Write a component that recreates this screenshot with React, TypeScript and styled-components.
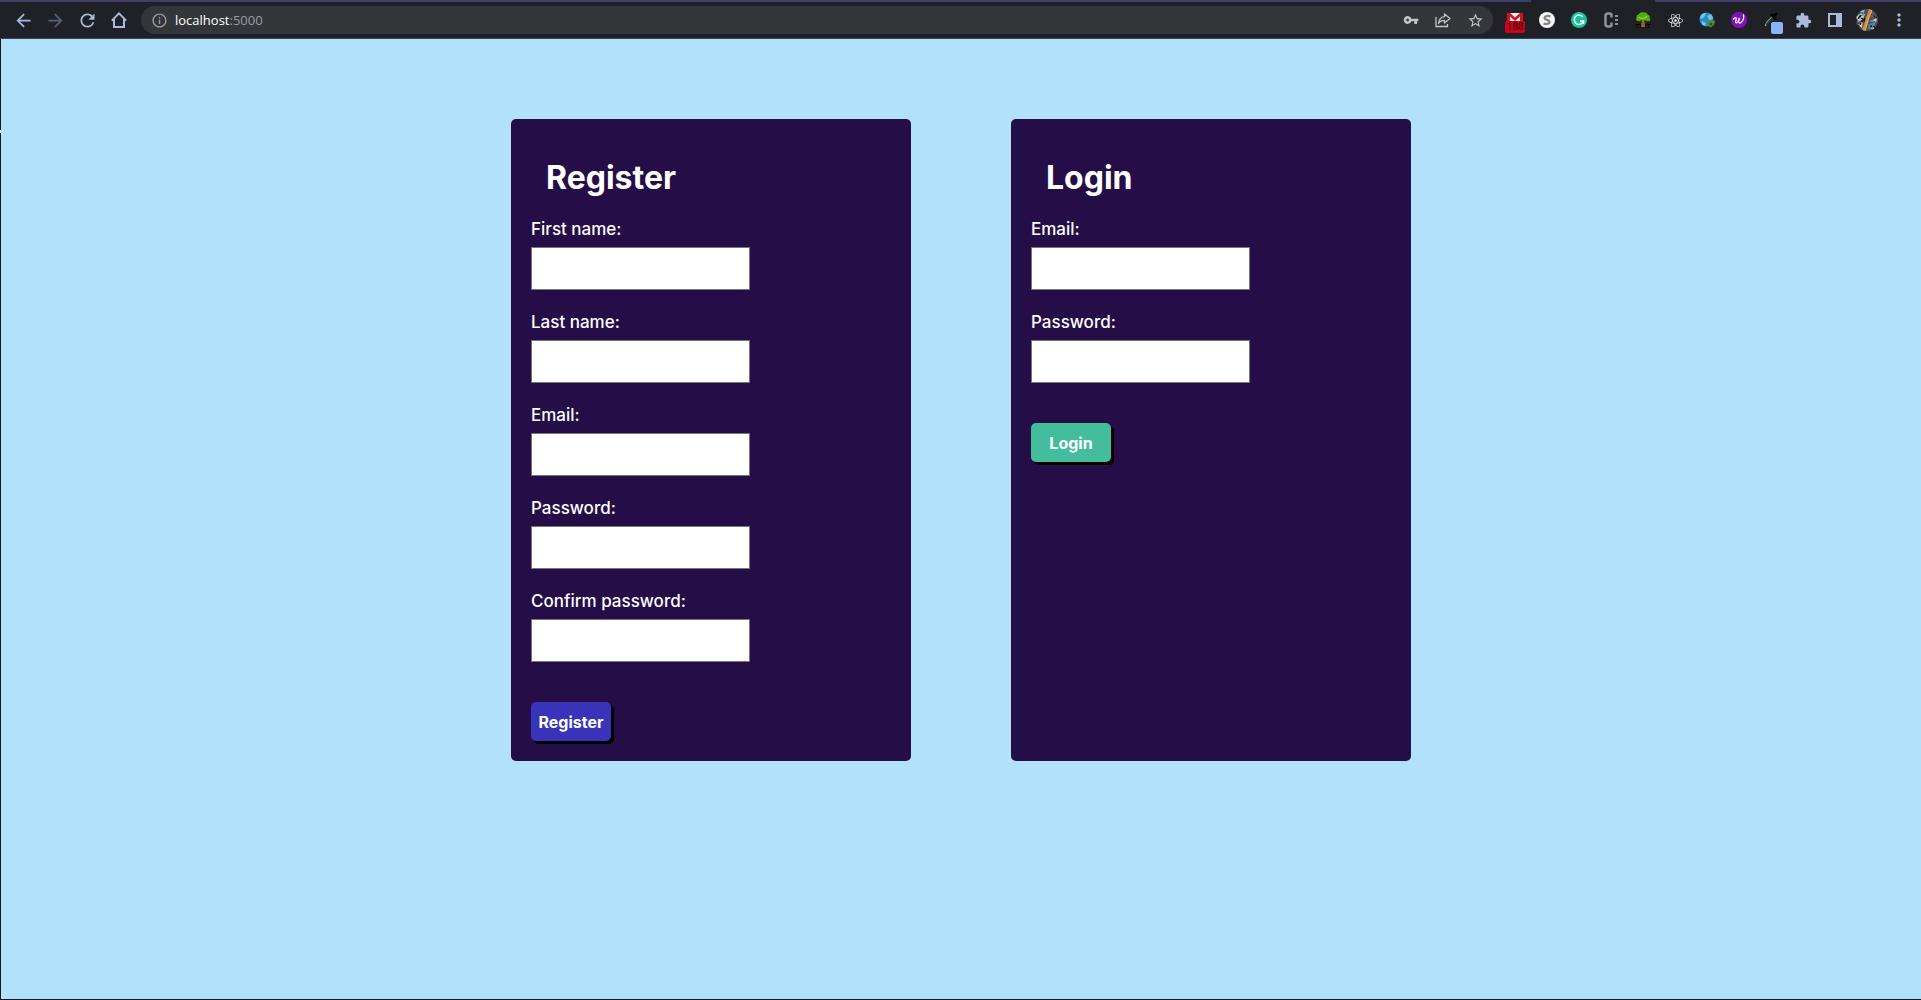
import React, { useId } from "react";
import styled, { createGlobalStyle } from "styled-components";
import {
  MdArrowBack,
  MdArrowForward,
  MdRefresh,
  MdInfoOutline,
  MdVpnKey,
  MdStarBorder,
  MdExtension,
  MdMoreVert,
} from "react-icons/md";
import { FaReact } from "react-icons/fa";

const GlobalStyle = createGlobalStyle`
  *, *::before, *::after { box-sizing: border-box; }
  body { margin: 0; background: #b1e1fb; }
`;

const Window = styled.div`
  min-height: 100vh;
  display: flex;
  flex-direction: column;
  background: #b1e1fb;
  font-family: Inter, "Liberation Sans", sans-serif;
`;

const TabStrip = styled.div`
  display: flex;
  height: 2px;
  background: #202127;
`;

const TabStripFill = styled.div<{ $width?: number }>`
  background: #413d68;
  flex: ${(p) => (p.$width ? `0 0 ${p.$width}px` : "1")};
`;

const ActiveTab = styled.div`
  flex: 0 0 124px;
`;

const Toolbar = styled.header`
  display: flex;
  align-items: center;
  height: 37px;
  padding: 0 6px 0 7px;
  background: #202127;
  border-bottom: 1px solid #45424e;
`;

const Group = styled.div`
  display: flex;
  flex: none;
`;

const IconButton = styled.button<{ $color?: string }>`
  display: flex;
  align-items: center;
  justify-content: center;
  width: 32px;
  height: 28px;
  padding: 0;
  border: 0;
  background: none;
  color: ${(p) => p.$color ?? "#a9bbdc"};
`;

const Omnibox = styled.div`
  display: flex;
  flex: 1;
  align-items: center;
  justify-content: space-between;
  height: 28px;
  margin: 0 6px;
  padding: 0 2px;
  border-radius: 14px;
  background: #35363a;
`;

const Address = styled.button`
  padding: 0;
  border: 0;
  background: none;
  color: #ffffff;
  font: 13px/20px "Open Sans", "Noto Sans", sans-serif;
`;

const Port = styled.span`
  color: #9a9da1;
`;

const ExtensionIcon = styled.span`
  position: relative;
  display: flex;
`;

const Badge = styled.span`
  position: absolute;
  top: 9px;
  left: -2px;
  width: 20px;
  border-radius: 2px;
  background: #d3021c;
  color: #38000a;
  font: 500 10px/12px Roboto, sans-serif;
  text-align: center;
`;

const Swatch = styled.span`
  position: absolute;
  top: 10px;
  left: 8px;
  width: 12px;
  height: 12px;
  border-radius: 2px;
  background: #8ab4f8;
`;

const Body = styled.div`
  flex: 1;
  display: flex;
  border-bottom: 1px solid #1e1422;
`;

const WindowEdge = styled.div`
  flex: 0 0 1px;
  background: linear-gradient(#17181c 91px, #ffffff 91px, #ffffff 94px, #17181c 94px);
`;

const Page = styled.main`
  display: flex;
  justify-content: center;
  flex: 1;
  align-items: flex-start;
  padding: 80px 20px;
`;

const Cards = styled.div`
  display: flex;
  justify-content: center;
  flex: 1;
  gap: 100px;
`;

const Card = styled.form`
  flex: 0 1 400px;
  padding: 20px;
  border-radius: 5px;
  background: #250d47;
  color: #ffffff;
`;

const Title = styled.h1`
  margin: 0;
  padding: 15px;
  font-size: 32px;
  line-height: 48px;
  font-weight: 700;
`;

const FieldRow = styled.div`
  display: flex;
  flex-direction: column;
  align-items: flex-start;
  gap: 6px;
  margin-bottom: 20px;
`;

const Label = styled.label`
  font-size: 17px;
  line-height: 24px;
  font-weight: 500;
`;

const TextInput = styled.input`
  width: 219px;
  max-width: 100%;
  height: 43px;
  padding: 0 8px;
  border: 1px solid #767676;
  background: #ffffff;
  font: inherit;
`;

const SubmitButton = styled.button<{ $color: string }>`
  display: block;
  width: 80px;
  height: 39px;
  margin-top: 40px;
  padding: 0;
  border: 0;
  border-radius: 5px;
  background: ${(p) => p.$color};
  box-shadow: 3px 3px #000000;
  color: #ffffff;
  font-family: inherit;
  font-size: 16px;
  font-weight: 700;
`;

const HomeIcon = () => (
  <svg width="16" height="16" viewBox="0 0 16 16" fill="none" stroke="currentColor" strokeWidth="2">
    <path d="M.8 8.6 8 1.4l7.2 7.2M3 7v8h10V7" />
  </svg>
);

const ShareIcon = () => (
  <svg width="16" height="16" viewBox="0 0 16 16" fill="none" stroke="currentColor" strokeWidth="1.3">
    <path d="M1 5v9.500h11.500V12" />
    <path d="M9.500 2 15 6.500 9.500 11V8.400C6.500 8.400 4.800 9.300 3.500 11.500 3.900 7.500 6 5 9.500 4.600Z" strokeLinejoin="round" />
  </svg>
);

const MailIcon = () => (
  <svg width="16" height="16" viewBox="0 0 16 16">
    <path d="M0 1h16v12H0z" fill="#d5101f" />
    <path d="M3 1h10L8 5.500z" fill="#f6eeee" />
    <path d="M3 4.500 8 9l5-4.500V10H3z" fill="#f6eeee" />
  </svg>
);

const ScriptIcon = () => (
  <svg width="16" height="16" viewBox="0 0 16 16">
    <circle cx="8" cy="8" r="8" fill="#f5f5f5" />
    <path d="M11.500 4.300C8.500 3.300 5.500 4 5.500 6c0 2 5 1.700 5 3.800 0 2.500-3.500 2.700-6 1.700" fill="none" stroke="#858585" strokeWidth="2.300" />
  </svg>
);

const GrammarIcon = () => (
  <svg width="16" height="16" viewBox="0 0 16 16">
    <circle cx="8" cy="8" r="8" fill="#15c39a" />
    <path d="M11.800 5A4.700 4.700 0 1 0 12.500 9H9M12.500 9v3" fill="none" stroke="#fff" strokeWidth="1.500" />
  </svg>
);

const ColonIcon = () => (
  <svg width="16" height="16" viewBox="0 0 16 16" fill="#909193">
    <path d="M8.500 5.500V3.500Q8.500 1.500 6.500 1.500H5Q2.500 1.500 2.500 4v8q0 2.500 2.500 2.500h1.500q2 0 2-2V10.500" fill="none" stroke="#909193" strokeWidth="2.500" />
    <path d="M12 3h3v2h-3zM12 7h3v2h-3zM12 11h3v2h-3z" />
  </svg>
);

const TreeIcon = () => (
  <svg width="16" height="16" viewBox="0 0 16 16">
    <path d="M0 12h16v3.500H0z" fill="#0b0806" />
    <path d="M7 7h2.300l.7 8H6z" fill="#a0642a" />
    <path d="M5 9C2 10 0 8 1.500 6 1 3 3 3 4 2c1-2 3-2 4-1.500C10 0 12 1 12.500 2.500 15 3 15 5 14.500 6c2 2 0 4-2.500 3L8 7.500Z" fill="#4fad0c" />
    <path d="M4 5c2 2 6 2 8-1" fill="none" stroke="#86d72d" strokeWidth="1.500" />
    <path d="M1 13v2M4 13v2M12 13v2M15 13v2" stroke="#82421d" strokeWidth=".7" />
  </svg>
);

const GlobeIcon = () => (
  <svg width="16" height="16" viewBox="0 0 16 16">
    <circle cx="7.500" cy="7.500" r="7" fill="#2c8bc7" />
    <path d="M2 3c2-2 4-2 5-2L6 4 3 7 1 6zM8 4l4-2 2 4-3 3zM3 9l4 2-1 3C3 13 2 11 3 9z" fill="#71c2e7" />
    <path d="M8.500 10.500 12 8l4 1-1 4-3.500 2.500-3-2z" fill="#568d2a" />
    <circle cx="12" cy="12" r="1.500" fill="#285332" />
  </svg>
);

const WaveIcon = () => (
  <svg width="16" height="16" viewBox="0 0 16 16">
    <circle cx="8" cy="8" r="8" fill="#8510bd" />
    <path d="M2.500 7c2-2.500 3.500-1.500 2.500 1-1 3 .5 4 2 1.500L8.500 6C7 10 8 12 10 10.500c2-1.500 3-5 2.500-7.500" fill="none" stroke="#fff" strokeWidth="1.300" strokeLinecap="round" />
  </svg>
);

const DropperIcon = () => (
  <svg width="16" height="16" viewBox="0 0 16 16" fill="none" strokeLinecap="round">
    <path d="M2.500 13.500 4 10l5-5" stroke="#8fbea3" strokeWidth="1.300" />
    <path d="m4 12 5.500-6" stroke="#17462b" strokeWidth="2" />
    <path d="m9 3 3 3M10.500 4.500 13 2" stroke="#020203" strokeWidth="3" />
  </svg>
);

const PanelIcon = () => (
  <svg width="14" height="14" viewBox="0 0 14 14" fill="currentColor">
    <path d="M0 0h14v14H0zM2 2v10h6V2z" fillRule="evenodd" />
  </svg>
);

const AvatarIcon = () => {
  const clip = useId();
  return (
    <svg width="22" height="22" viewBox="0 0 22 22">
      <clipPath id={clip}><circle cx="11" cy="11" r="11" /></clipPath>
      <g clipPath={`url(#${clip})`}>
        <path d="M0 0h22v22H0z" fill="#4a5257" />
        <path d="M0 8l5-4 4 1-2 5-5 3zM2 16l5-4-1 7zM4 2l5-1-2 3zM16 11l5-2-1 4zM14 19l4-2v4z" fill="#c3c8c5" />
        <path d="M15 2l5 6-5-1zM13 15l7-2-3 6-5 1z" fill="#5f8294" />
        <path d="M0 12l8-9M2 18l7-9M3 7l6 5M14 17l6 1M15 5l6 4" stroke="#0b0c0d" strokeWidth="1.300" strokeDasharray="2 1" />
        <path d="M14 0c-1 6-2 6-3 10s-2 7-4 12" fill="none" stroke="#e58b26" strokeWidth="2.500" />
        <path d="M16 0c-1 6-3 7-4 12l-3 10" fill="none" stroke="#d9cbae" />
        <path d="m16 5 2 3h-4z" fill="#e33028" />
        <path d="M7 3v4M14 12h4" stroke="#31a7c5" strokeWidth="1.500" />
      </g>
    </svg>
  );
};

function Field({ label, type = "text" }: { label: string; type?: string }) {
  const id = useId();
  return (
    <FieldRow>
      <Label htmlFor={id}>{label}</Label>
      <TextInput id={id} type={type} />
    </FieldRow>
  );
}

function BrowserBar() {
  return (
    <>
      <TabStrip>
        <TabStripFill $width={1531} />
        <ActiveTab />
        <TabStripFill />
      </TabStrip>
      <Toolbar>
        <Group>
          <IconButton aria-label="Back"><MdArrowBack size={21} /></IconButton>
          <IconButton aria-label="Forward" $color="#566079"><MdArrowForward size={21} /></IconButton>
          <IconButton aria-label="Reload"><MdRefresh size={21} /></IconButton>
          <IconButton aria-label="Home"><HomeIcon /></IconButton>
        </Group>
        <Omnibox>
          <Group>
            <IconButton aria-label="Site information" $color="#9a9da1"><MdInfoOutline size={17} /></IconButton>
            <Address aria-label="Address">localhost<Port>:5000</Port></Address>
          </Group>
          <Group>
            <IconButton aria-label="Saved passwords" $color="#c2c4c7"><MdVpnKey size={16} /></IconButton>
            <IconButton aria-label="Share" $color="#c2c4c7"><ShareIcon /></IconButton>
            <IconButton aria-label="Bookmark" $color="#c2c4c7"><MdStarBorder size={17} /></IconButton>
          </Group>
        </Omnibox>
        <Group>
          <IconButton aria-label="Mail"><ExtensionIcon><MailIcon /><Badge>188</Badge></ExtensionIcon></IconButton>
          <IconButton aria-label="Scripts"><ScriptIcon /></IconButton>
          <IconButton aria-label="Grammar"><GrammarIcon /></IconButton>
          <IconButton aria-label="Code"><ColonIcon /></IconButton>
          <IconButton aria-label="Tree"><TreeIcon /></IconButton>
          <IconButton aria-label="React" $color="#f4f4f4"><FaReact size={15} /></IconButton>
          <IconButton aria-label="Globe"><GlobeIcon /></IconButton>
          <IconButton aria-label="Wave"><WaveIcon /></IconButton>
          <IconButton aria-label="Color picker"><ExtensionIcon><DropperIcon /><Swatch /></ExtensionIcon></IconButton>
          <IconButton aria-label="Extensions"><MdExtension size={17} /></IconButton>
          <IconButton aria-label="Side panel"><PanelIcon /></IconButton>
          <IconButton aria-label="Profile"><AvatarIcon /></IconButton>
          <IconButton aria-label="Menu"><MdMoreVert size={20} /></IconButton>
        </Group>
      </Toolbar>
    </>
  );
}

export default function App() {
  const stay = (e: React.FormEvent) => e.preventDefault();
  return (
    <Window>
      <GlobalStyle />
      <BrowserBar />
      <Body>
        <WindowEdge />
        <Page>
          <Cards>
            <Card onSubmit={stay}>
              <Title>Register</Title>
              <Field label="First name:" />
              <Field label="Last name:" />
              <Field label="Email:" />
              <Field label="Password:" type="password" />
              <Field label="Confirm password:" type="password" />
              <SubmitButton $color="#3833b8">Register</SubmitButton>
            </Card>
            <Card onSubmit={stay}>
              <Title>Login</Title>
              <Field label="Email:" />
              <Field label="Password:" type="password" />
              <SubmitButton $color="#43bd9b">Login</SubmitButton>
            </Card>
          </Cards>
        </Page>
      </Body>
    </Window>
  );
}
